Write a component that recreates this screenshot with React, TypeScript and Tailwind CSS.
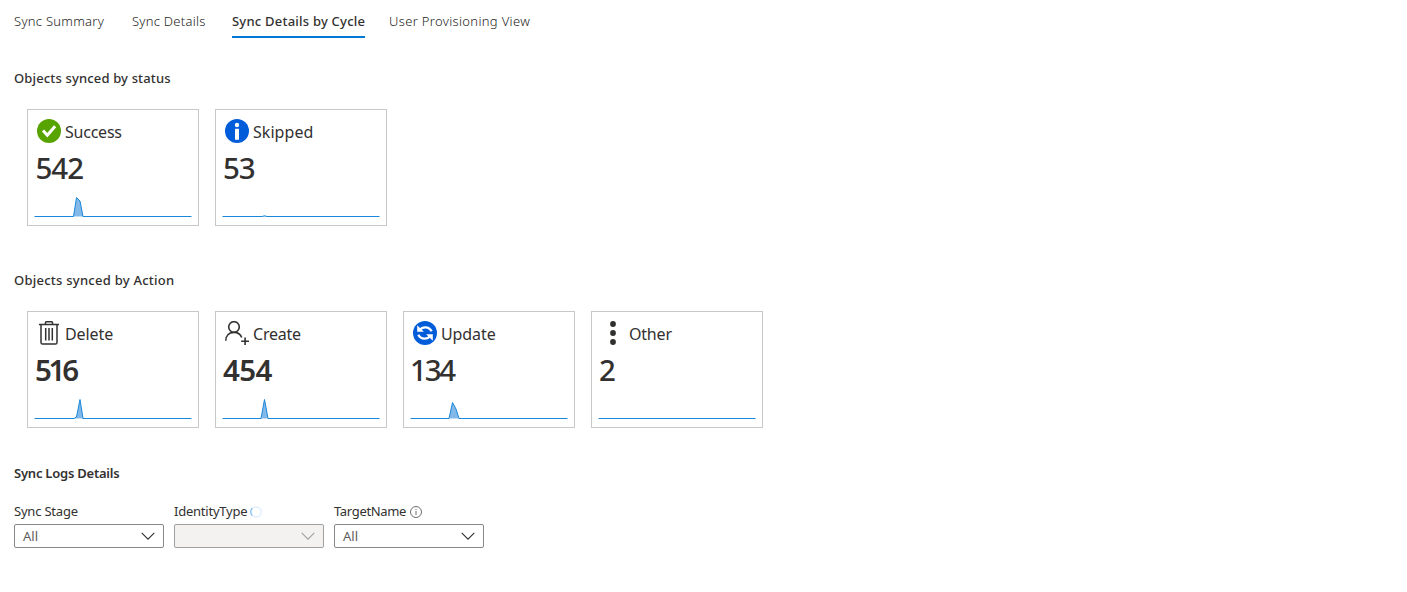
import React from "react";

const ink = "#323130";

function CheckIcon() {
  return (
    <svg width="24" height="24" viewBox="0 0 24 24">
      <circle cx="12" cy="12" r="12" fill="#57a300" />
      <path d="M6 11.600l4.300 4.600 7.800-9" fill="none" stroke="#fff" strokeWidth="3" />
    </svg>
  );
}

function InfoIcon() {
  return (
    <svg width="24" height="24" viewBox="0 0 24 24">
      <circle cx="12" cy="12" r="12" fill="#015cda" />
      <circle cx="12" cy="6" r="2.2" fill="#fff" />
      <rect x="10" y="9.700" width="4" height="11" rx="0.500" fill="#fff" />
    </svg>
  );
}

function TrashIcon() {
  return (
    <svg width="24" height="24" viewBox="0 0 24 24" fill="none" stroke={ink} strokeWidth="1.500">
      <path d="M2 3.500h20M8.500 3.500V1.600q0-.8.8-.8h5.400q.8 0 .8.8v1.900M4 3.500v18q0 1.600 1.600 1.600h12.800q1.600 0 1.600-1.600v-18" />
      <path d="M8.700 7v12.500M12 7v12.500M15.300 7v12.500" />
    </svg>
  );
}

function UserAddIcon() {
  return (
    <svg width="24" height="24" viewBox="0 0 24 24" fill="none" stroke={ink} strokeWidth="1.600">
      <circle cx="9" cy="6" r="5.300" />
      <path d="M.8 19.800C.8 14.500 4.300 11.400 9 11.400c3.800 0 6.600 2 7.700 5.100M16.200 20.300H24M20.100 16.500V24" />
    </svg>
  );
}

function SyncIcon() {
  return (
    <svg width="24" height="24" viewBox="0 0 24 24">
      <circle cx="12" cy="12" r="12" fill="#015cda" />
      <path d="M7 8.800C9.200 5.700 15.800 4.800 18.700 10.300M17 15.200C14.800 18.300 8.200 19.200 5.300 13.700" fill="none" stroke="#fff" strokeWidth="2.300" />
      <path d="M4.200 4.300v6.500h6.700zM19.800 19.700v-6.500h-6.700z" fill="#fff" />
    </svg>
  );
}

function DotsIcon() {
  return (
    <svg width="24" height="24" viewBox="0 0 24 24" fill={ink}>
      <circle cx="12" cy="3" r="2.900" />
      <circle cx="12" cy="12" r="2.900" />
      <circle cx="12" cy="21" r="2.900" />
    </svg>
  );
}

function Sparkline({ points }: { points: string }) {
  return (
    <svg className="block" width="158" height="24" viewBox="0 0 158 24">
      <path d={`M0.500 22.500${points}H157`} fill="#83b9e8" />
      <path d={`M0.500 22.500${points}H157.500`} fill="none" stroke="#1a87d9" strokeWidth="1" />
    </svg>
  );
}

type CardProps = {
  icon: React.ReactNode;
  label: string;
  labelClass: string;
  value: string;
  valueClass: string;
  points: string;
};

function Card({ icon, label, labelClass, value, valueClass, points }: CardProps) {
  return (
    <div className="flex h-[117px] w-[172px] flex-col border border-[#c8c8c8] bg-white">
      <div className="mt-[9px] flex h-6 items-center gap-1 pl-[9px]">
        {icon}
        <span className={`pt-px text-[16px] leading-6 font-normal whitespace-nowrap ${labelClass}`}>{label}</span>
      </div>
      <div className={`mt-[5px] h-[40px] pl-[7px] text-[29.500px] leading-[40px] ${valueClass}`}>{value}</div>
      <div className="mt-[6px] pl-[6px]">
        <Sparkline points={points} />
      </div>
    </div>
  );
}

function Select({ value, disabled = false }: { value: string; disabled?: boolean }) {
  return (
    <div
      className={`flex h-6 w-[150px] items-center justify-between rounded-[2px] border pr-2 pl-2 ${
        disabled ? "border-[#a19f9d] bg-[#f3f2f1]" : "border-[#8a8886] bg-white"
      }`}
    >
      <span className="text-[13px] leading-5 text-[#605e5c]">{value}</span>
      <svg width="14" height="8" viewBox="0 0 14 8" fill="none" stroke={disabled ? "#a19f9d" : ink} strokeWidth="1.100">
        <path d="M.7.900L7 7.200 13.300.900" />
      </svg>
    </div>
  );
}

export default function App() {
  return (
    <main className="h-[592px] w-full overflow-hidden bg-white pl-[14px] font-['Noto_Sans',sans-serif] text-[#323130]">
      <nav className="flex h-[38px] items-end text-[13px] font-light whitespace-nowrap text-[#252423]">
        <div className="h-[26px] w-[118px] leading-[19px] tracking-[0.280px]">Sync Summary</div>
        <div className="h-[26px] w-[100px] leading-[19px] tracking-[0.270px]">Sync Details</div>
        <div className="mr-6 h-[26px] w-[133px] border-b-2 border-[#0078d4] leading-[19px] font-medium tracking-[0.220px] text-[#323130]">Sync Details by Cycle</div>
        <div className="h-[26px] leading-[19px] tracking-[0.330px]">User Provisioning View</div>
      </nav>

      <h2 className="mt-[30px] h-5 text-[13px] leading-5 font-medium tracking-[0.150px]">Objects synced by status</h2>
      <div className="mt-[21px] ml-[13px] flex gap-4">
        <Card icon={<CheckIcon />} label="Success" labelClass="tracking-[-0.230px]" value="542" valueClass="ml-[0.500px] font-medium tracking-[-1px]" points="H39.500L42.500 3.500L46 7L49 22.500" />
        <Card icon={<InfoIcon />} label="Skipped" labelClass="tracking-[0.050px]" value="53" valueClass="font-medium tracking-[-1px]" points="H40L42.500 21.800L45 22.500" />
      </div>

      <h2 className="mt-[44px] h-5 text-[13px] leading-5 font-medium tracking-[0.250px]">Objects synced by Action</h2>
      <div className="mt-[21px] ml-[13px] flex gap-4">
        <Card icon={<TrashIcon />} label="Delete" labelClass="tracking-[-0.100px]" value="516" valueClass="font-semibold tracking-[-3.300px]" points="H40L42.500 21L46 3.500L49 22.500" />
        <Card icon={<UserAddIcon />} label="Create" labelClass="tracking-[-0.220px]" value="454" valueClass="font-semibold tracking-[-0.600px]" points="H39L42.500 3.500L46 22.500" />
        <Card icon={<SyncIcon />} label="Update" labelClass="tracking-[-0.100px]" value="134" valueClass="-ml-px font-medium tracking-[-2.200px]" points="H39L42.500 6.500L46 13L49 22.500" />
        <Card icon={<DotsIcon />} label="Other" labelClass="tracking-[-0.200px]" value="2" valueClass="font-medium" points="" />
      </div>

      <h2 className="mt-[35px] h-5 text-[13px] leading-5 font-semibold tracking-[-0.230px]">Sync Logs Details</h2>
      <div className="mt-[18px] flex gap-[10px] text-[13px] leading-5">
        <div>
          <div className="flex h-[23px] items-start">
            <span className="tracking-[-0.200px]">Sync Stage</span>
          </div>
          <Select value="All" />
        </div>
        <div>
          <div className="flex h-[23px] items-start">
            <span className="w-[76px] tracking-[-0.230px]">IdentityType</span>
            <svg className="mt-[5px]" width="12" height="12" viewBox="0 0 12 12" fill="none" strokeWidth="1.200">
              <circle cx="6" cy="6" r="5.200" stroke="#deecf9" />
              <path d="M2.300 2.300A5.200 5.200 0 0 0 2.300 9.700" stroke="#82bdf0" />
            </svg>
          </div>
          <Select value="" disabled />
        </div>
        <div>
          <div className="flex h-[23px] items-start">
            <span className="w-[76px] tracking-[-0.330px]">TargetName</span>
            <svg className="mt-[5px]" width="12" height="12" viewBox="0 0 12 12" fill="none" stroke="#605e5c" strokeWidth="0.900">
              <circle cx="6" cy="6" r="5.500" />
              <path d="M6 5v4M6 3v1.100" />
            </svg>
          </div>
          <Select value="All" />
        </div>
      </div>
    </main>
  );
}
